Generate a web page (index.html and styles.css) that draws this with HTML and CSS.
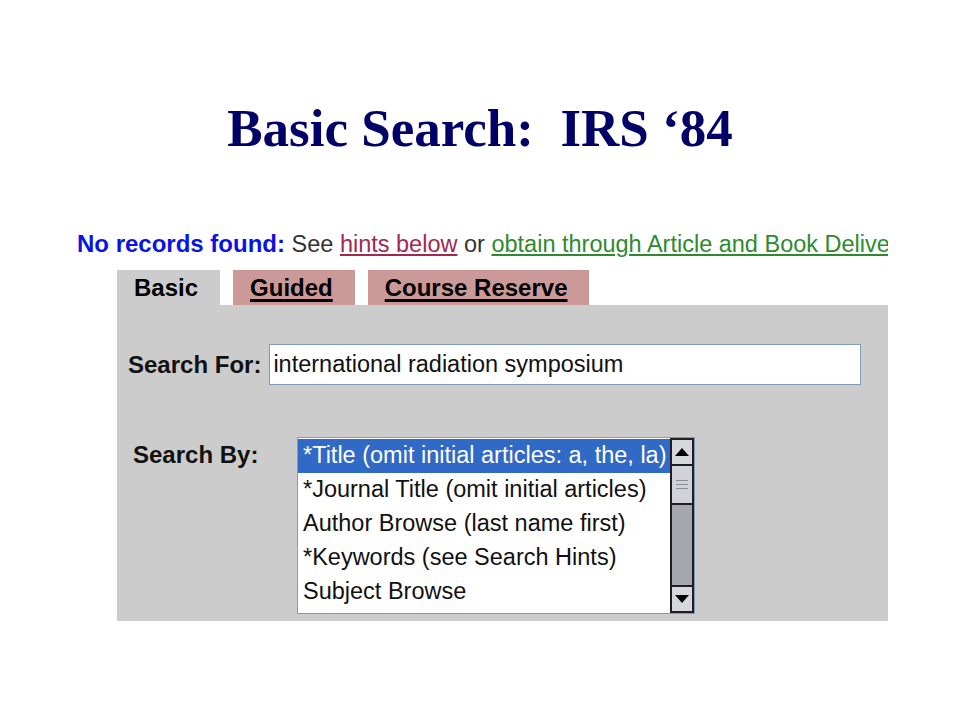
FILE: index.html
```html
<!DOCTYPE html>
<html lang="en">
<head>
  <meta charset="UTF-8">
  <meta name="viewport" content="width=device-width, initial-scale=1.0">
  <title>Basic Search: IRS '84</title>
  <link rel="stylesheet" href="styles.css">
</head>
<body>
  <h1 class="slide-title">Basic Search:&nbsp; IRS &lsquo;84</h1>

  <div class="shot">
    <p class="status">
      <b class="status-label">No records found:</b> See
      <a class="hint-link" href="#hints">hints below</a> or
      <a class="deliver-link" href="#deliver">obtain through Article and Book Delivery</a>
    </p>

    <div class="tabs">
      <span class="tab active">Basic</span>
      <a class="tab" href="#guided">Guided</a>
      <a class="tab" href="#reserve">Course Reserve</a>
    </div>

    <div class="panel">
      <div class="row">
        <label class="field-label" for="q">Search For:</label>
        <input class="search-input" id="q" type="text" value="international radiation symposium">
      </div>

      <div class="row row-by">
        <span class="field-label by-label">Search By:</span>
        <div class="listbox">
          <ul class="options">
            <li class="option selected">*Title (omit initial articles: a, the, la)</li>
            <li class="option">*Journal Title (omit initial articles)</li>
            <li class="option">Author Browse (last name first)</li>
            <li class="option">*Keywords (see Search Hints)</li>
            <li class="option">Subject Browse</li>
          </ul>
          <div class="scrollbar">
            <div class="sb-btn">
              <svg width="14" height="8" viewBox="0 0 14 8"><polygon points="7,0 14,8 0,8" fill="#000"/></svg>
            </div>
            <div class="sb-thumb">
              <span class="grip"></span>
              <span class="grip"></span>
              <span class="grip"></span>
            </div>
            <div class="sb-track"></div>
            <div class="sb-btn">
              <svg width="14" height="8" viewBox="0 0 14 8"><polygon points="0,0 14,0 7,8" fill="#000"/></svg>
            </div>
          </div>
        </div>
      </div>
    </div>
  </div>
</body>
</html>
```

FILE: styles.css
```css
body {
  margin: 0;
  background: #fff;
  font-family: "Liberation Sans", Arial, sans-serif;
}
.slide-title {
  margin: 98px 0 0;
  font-family: "Liberation Serif", "Times New Roman", serif;
  font-size: 53px;
  line-height: 61px;
  font-weight: bold;
  color: #000066;
  text-align: center;
}
.shot {
  width: 811px;
  margin: 71px 0 0 77px;
  overflow: hidden;
  white-space: nowrap;
}
.status {
  margin: 0;
  font-size: 23.5px;
  line-height: 28px;
  color: #333;
}
.status-label {
  font-size: 24px;
  color: #0a14e0;
}
.hint-link {
  color: #a3284f;
}
.deliver-link {
  color: #2f8a2f;
}
.tabs {
  display: flex;
  gap: 13px;
  margin: 12px 0 0 40px;
}
.tab {
  display: block;
  height: 35px;
  padding: 0 22px 0 17px;
  font-size: 24px;
  line-height: 35px;
  font-weight: bold;
  color: #000;
  background: #cc9999;
  text-decoration: underline;
  text-decoration-thickness: 3px;
  text-underline-offset: 3px;
}
.tab.active {
  background: #cccccc;
  text-decoration: none;
}
.panel {
  margin-left: 40px;
  padding: 39px 0 7px 11px;
  background: #cccccc;
}
.row {
  display: flex;
  align-items: center;
}
.row-by {
  align-items: flex-start;
  margin-top: 52px;
}
.field-label {
  font-size: 24px;
  line-height: 28px;
  font-weight: bold;
  color: #111;
}
.search-input {
  width: 592px;
  height: 41px;
  box-sizing: border-box;
  margin-left: 8px;
  padding: 0 3px;
  border: 1px solid #7f9db9;
  background: #fff;
  font-family: "Liberation Sans", Arial, sans-serif;
  font-size: 23.5px;
  color: #111;
}
.by-label {
  width: 164px;
  margin: 4px 0 0 5px;
}
.listbox {
  display: flex;
  width: 398px;
  height: 177px;
  box-sizing: border-box;
  border: 1px solid #7f9db9;
  background: #fff;
}
.options {
  flex: 1;
  margin: 0;
  padding: 1px 0 0;
  list-style: none;
}
.option {
  height: 34px;
  padding-left: 5px;
  font-size: 23.5px;
  line-height: 33px;
  color: #111;
}
.option.selected {
  background: #3169c6;
  color: #fff;
}
.scrollbar {
  display: flex;
  flex-direction: column;
  width: 24px;
  box-sizing: border-box;
  border: 2px solid #1e1e24;
  background: #1e1e24;
  gap: 2px;
}
.sb-btn {
  display: flex;
  align-items: center;
  justify-content: center;
  height: 24px;
  background: #d6d8dc;
}
.sb-thumb {
  display: flex;
  flex-direction: column;
  justify-content: center;
  gap: 3px;
  height: 37px;
  padding: 0 4px;
  background: #cfd2d6;
}
.grip {
  height: 1px;
  background: #8a8e94;
}
.sb-track {
  flex: 1;
  background: #a4a7ab;
}
```
